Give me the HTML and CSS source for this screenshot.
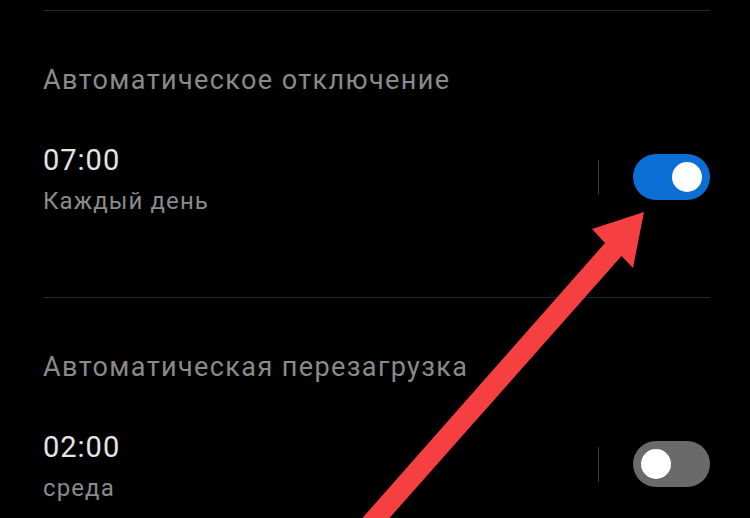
FILE: index.html
```html
<!DOCTYPE html>
<html lang="ru">
<head>
    <meta charset="UTF-8">
    <meta name="viewport" content="width=device-width, initial-scale=1.0">
    <title>Расписание питания</title>
    <link rel="stylesheet" href="styles.css">
</head>
<body>
    <div class="page">
        <div class="divider"></div>

        <h3 class="group-title">Автоматическое отключение</h3>
        <div class="row">
            <div class="row-text">
                <div class="row-time">07:00</div>
                <div class="row-sub">Каждый день</div>
            </div>
            <span class="row-sep"></span>
            <span class="switch on"><span class="knob"></span></span>
        </div>

        <div class="divider divider-mid"></div>

        <h3 class="group-title">Автоматическая перезагрузка</h3>
        <div class="row">
            <div class="row-text">
                <div class="row-time">02:00</div>
                <div class="row-sub">среда</div>
            </div>
            <span class="row-sep"></span>
            <span class="switch"><span class="knob"></span></span>
        </div>

        <!-- стрелка-указатель поверх списка -->
        <svg class="pointer" width="750" height="518" viewBox="0 0 750 518">
            <polygon points="644,212 633,268 621.5,256 370,540 343,540 605,243 592,229" fill="#f63f40"/>
        </svg>
    </div>
</body>
</html>
```

FILE: styles.css
```css
/* тёмная тема, как в настройках телефона */
body {
    margin: 0;
    background-color: #000;
    font-family: Roboto, "Noto Sans", sans-serif;
}
.page {
    position: relative;
    width: 750px;
    height: 518px;
    overflow: hidden;
    padding: 0 40px 0 43px;
    box-sizing: border-box;
}

/* разделители между группами */
.divider {
    height: 1px;
    margin-top: 10px;
    background-color: #262626;
}
.divider-mid {
    margin-top: 82px;
}

/* заголовок группы */
.group-title {
    margin: 53px 0 0;
    font-size: 27px;
    line-height: 32px;
    font-weight: 400;
    letter-spacing: 1.4px;
    color: #8a8a8a;
}

/* строка с временем и переключателем */
.row {
    display: flex;
    align-items: center;
    margin-top: 47px;
}
.row-text {
    flex: 1;
}
.row-time {
    font-size: 29px;
    line-height: 34px;
    letter-spacing: 1px;
    color: #e4e4e4;
}
.row-sub {
    margin-top: 10px;
    font-size: 24px;
    line-height: 28px;
    letter-spacing: 1.1px;
    color: #8a8a8a;
}
.row-sep {
    width: 1px;
    height: 35px;
    margin-right: 34px;
    margin-top: -4px;
    background-color: #383838;
}

/* переключатель */
.switch {
    display: flex;
    align-items: center;
    width: 77px;
    height: 46px;
    margin-top: -4px;
    padding: 0 8px;
    box-sizing: border-box;
    border-radius: 23px;
    background-color: #6a6a6a;
}
.switch.on {
    justify-content: flex-end;
    background-color: #0c6fd6;
}
.knob {
    width: 30px;
    height: 30px;
    border-radius: 50%;
    background-color: #fff;
}

.pointer {
    position: absolute;
    left: 0;
    top: 0;
}
```
